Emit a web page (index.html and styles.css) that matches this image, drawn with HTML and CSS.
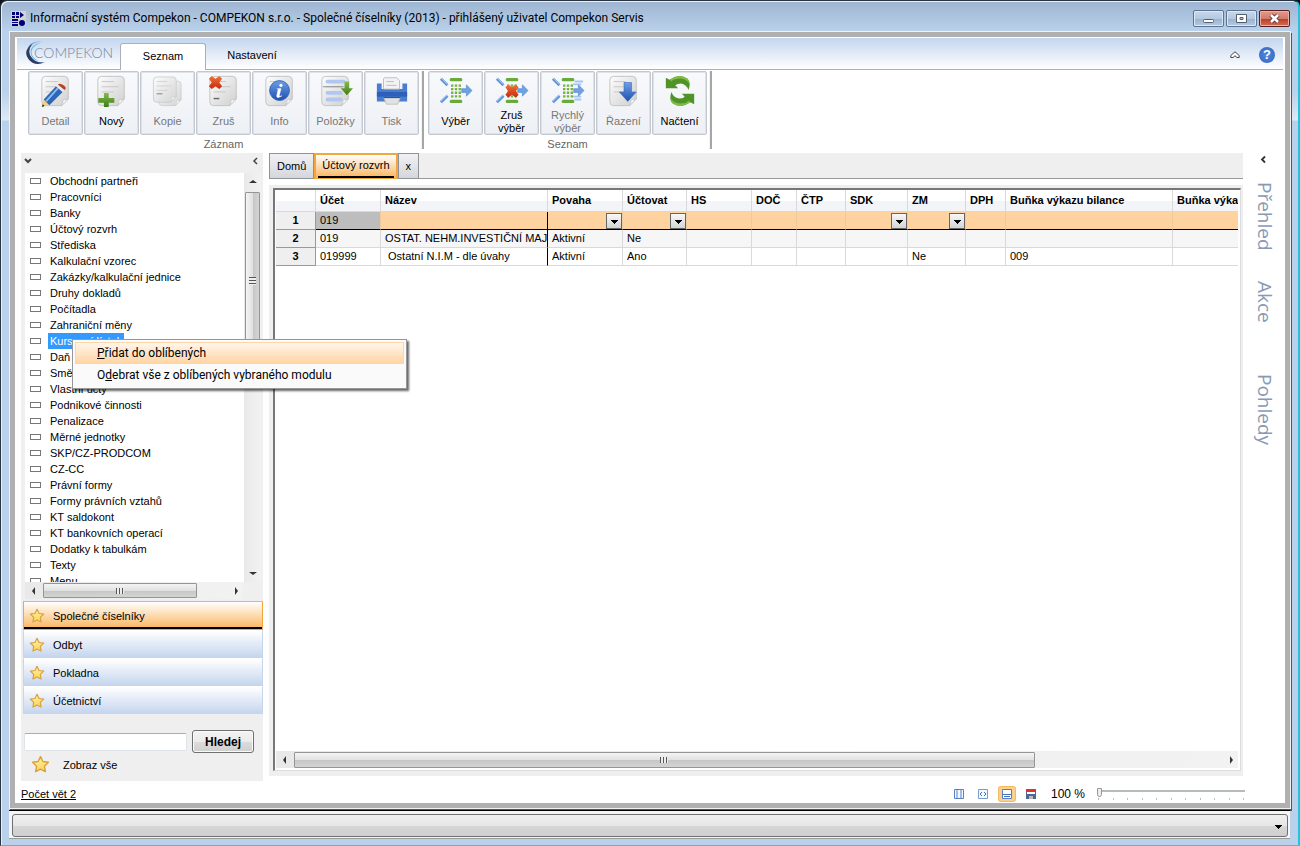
FILE: index.html
```html
<!DOCTYPE html>
<html lang="cs">
<head>
<meta charset="utf-8">
<title>Informační systém Compekon</title>
<link rel="stylesheet" href="styles.css">
</head>
<body>
<svg class="defs" aria-hidden="true">
  <defs>
    <linearGradient id="g-paper" x1="0" y1="0" x2="1" y2="1"><stop offset="0" stop-color="#fdfdfd"/><stop offset="1" stop-color="#cfcfcf"/></linearGradient>
    <linearGradient id="g-green" x1="0" y1="0" x2="0" y2="1"><stop offset="0" stop-color="#86bb4c"/><stop offset="1" stop-color="#3c7d16"/></linearGradient>
    <linearGradient id="g-blue" x1="0" y1="0" x2="0" y2="1"><stop offset="0" stop-color="#6d9fe6"/><stop offset="1" stop-color="#1e4fb0"/></linearGradient>
    <linearGradient id="g-red" x1="0" y1="0" x2="0" y2="1"><stop offset="0" stop-color="#f4733a"/><stop offset="1" stop-color="#c4290b"/></linearGradient>
    <linearGradient id="g-star" x1="0" y1="0" x2="0" y2="1"><stop offset="0" stop-color="#fff0a8"/><stop offset="1" stop-color="#fcd653"/></linearGradient>
    <symbol id="doc" viewBox="0 0 36 36">
      <path d="M7 2.500h20q4 0 4 4v20l-7 7H7q-4 0-4-4v-23q0-4 4-4z" fill="url(#g-paper)" stroke="#c4c4c4"/>
      <path d="M31 26l-7 7.500q2-3 1.500-6 3 .5 5.500-1.500z" fill="#fff" stroke="#bbb" stroke-width=".6"/>
      <path d="M7 8h13M7 13.500h18M7 19h13" stroke="#c6c6c6"/>
    </symbol>
    <symbol id="funnel" viewBox="0 0 36 36">
      <path d="M2 5l7 7M2 30l7-7" stroke="#5d94dc" stroke-width="3"/><path d="M2 4l7 7M2 29l7-7" stroke="#a9cdf5"/>
      <path d="M13 6h10M13 29h10" stroke="#69ab3a" stroke-width="3.500" stroke-linecap="round"/>
      <path d="M14 11v14M18 11v14M22 11v14" stroke="#73b23f" stroke-width="2.500" stroke-dasharray="2.500 1.300"/>
      <path d="M24 15.500h5v-4l6 6-6 6v-4h-5z" fill="#6ea2e2" stroke="#4c83cd" stroke-width=".6"/>
    </symbol>
    <symbol id="star" viewBox="0 0 18 18">
      <path d="M9 1.500l2.300 4.700 5.200.7-3.800 3.700.9 5.200L9 13.400l-4.600 2.400.9-5.200L1.500 6.900l5.200-.7z" fill="url(#g-star)" stroke="#d9a03f" stroke-width="1.300" stroke-linejoin="round"/>
    </symbol>
  </defs>
</svg>

<div class="window">
  <header class="titlebar">
    <svg class="app-icon" viewBox="0 0 15 15"><path fill="#d6d3ce" d="M0 0h15v15H0z"/><path fill="#00007b" d="M1 1h3v3H1zM5 1h3v3H5zM1 5h3v2H1zM5 5h3v2H5zM1 8h6v2H1zM1 11h6v1H1zM1 13h6v2H1zM9 1l4 3-4 3z"/><circle cx="11" cy="12" r="3" fill="#00007b"/></svg>
    <h1>Informační systém Compekon - COMPEKON s.r.o. - Společné číselníky (2013) - přihlášený uživatel Compekon Servis</h1>
    <div class="win-buttons">
      <button aria-label="Minimalizovat"><svg viewBox="0 0 29 15"><rect x="9.500" y="8.500" width="10" height="3" rx="1" fill="#fff" stroke="#555e6b"/></svg></button>
      <button aria-label="Maximalizovat"><svg viewBox="0 0 29 15"><path d="M9.500 3.500h10v8h-10zM13 6.500v2h3v-2z" fill="#fff" fill-rule="evenodd" stroke="#555e6b"/></svg></button>
      <button class="close" aria-label="Zavřít"><svg viewBox="0 0 29 15"><path d="M11 4l7 7M18 4l-7 7" stroke="#5b3b3b" stroke-width="4.500"/><path d="M11 4l7 7M18 4l-7 7" stroke="#fff" stroke-width="2.500"/></svg></button>
    </div>
  </header>

  <div class="frame">
    <nav class="ribbon-tabs">
      <div class="logo">
        <svg viewBox="0 0 28 28"><path d="M20 2Q8 1 5 9q-3 9 7 15 5 2 10 0Q4 26 2 13 3 0 20 2z" fill="#7fa4cf"/><path d="M17 3Q6 5 6 13q0 8 9 10-8-4-8-10 0-6 10-10z" fill="#6bbbe8"/><path d="M8 4Q-3 12 4 21q7 8 17 3-8 1-13-4-7-7 0-16z" fill="#2b3d66"/></svg>
        <span>COMPEKON</span>
      </div>
      <button class="rtab active">Seznam</button>
      <button class="rtab">Nastavení</button>
      <div class="ribbon-right">
        <button class="plain" aria-label="Sbalit"><svg class="i10" viewBox="0 0 10 10"><path d="M.8 7.500v-2L5 1.800l4.200 3.700v2H7L5 5.700 3 7.500z" fill="#fff" stroke="#444"/></svg></button>
        <button class="plain help" aria-label="Nápověda">?</button>
      </div>
    </nav>

    <div class="toolbar">
      <section class="group">
        <div class="tools">
          <button class="tool" disabled><svg viewBox="0 0 36 36"><use href="#doc"/><path d="M3 35l2-8 6 5z" fill="#f6cf79"/><path d="M3 35l1-3 2 2z" fill="#222"/><path d="M5 27L18 13l7 6-14 14z" fill="#2d68b7"/><path d="M7.500 29L20 15" stroke="#8bbcf0" stroke-width="2"/><path d="M18 13l2-2 7 6-2 2z" fill="#e8e8e8"/><path d="M20 11q2-2 6 1t1 5z" fill="#b6402a"/></svg><span>Detail</span></button>
          <button class="tool"><svg viewBox="0 0 36 36"><use href="#doc"/><path d="M9.500 20h5v5.500h6v5h-6V35h-5v-4.500H3.500v-5h6z" fill="url(#g-green)"/></svg><span>Nový</span></button>
          <button class="tool" disabled><svg viewBox="0 0 36 36"><g opacity=".85"><use href="#doc" x="6" y="5" width="30" height="31"/><use href="#doc" x="0" y="0" width="31" height="33"/></g><path d="M6 21h6" stroke="#777"/></svg><span>Kopie</span></button>
          <button class="tool" disabled><svg viewBox="0 0 36 36"><use href="#doc"/><path d="M7 26h6" stroke="#666" stroke-width="1.500"/><path d="M2 5l3-3 4 3 4-3 3 3-3 4 3 4-3 3-4-3-4 3-3-3 3-4z" fill="url(#g-red)"/></svg><span>Zruš</span></button>
          <button class="tool" disabled><svg viewBox="0 0 36 36"><use href="#doc"/><circle cx="17.500" cy="17.500" r="10.500" fill="url(#g-blue)" stroke="#2f66bd"/><circle cx="19" cy="12" r="1.700" fill="#fff"/><path d="M15 15.500h4l-2 8q1 .5 3-.5-5 3.500-5.500.5l1.500-7z" fill="#fff" stroke="#fff" stroke-width=".6"/></svg><span>Info</span></button>
          <button class="tool" disabled><svg viewBox="0 0 36 36"><use href="#doc"/><path d="M9 8h17M9 20h14M9 27h14" stroke="#b1c7ef" stroke-width="4" stroke-linecap="round"/><path d="M4 13.500h22" stroke="#8d8d8d"/><path d="M27 8h5v7h4l-6.500 7.500L23 15h4z" fill="url(#g-green)"/></svg><span>Položky</span></button>
          <button class="tool" disabled><svg viewBox="0 0 36 36"><path d="M2 10h5v6h22v-6h5v19H2z" fill="#4a7dd0"/><path d="M2 19h32v5H2z" fill="#2e5fb9"/><path d="M10 4h13l3 3v9H9V5z" fill="#f3f3f3" stroke="#bbb"/><path d="M12 8h8M12 12h11" stroke="#bbb"/><path d="M9 25h18l-3 7H12z" fill="#e2e2e2" stroke="#aaa" stroke-width=".6"/><path d="M9 25h18" stroke="#1d438a"/></svg><span>Tisk</span></button>
        </div>
        <h2>Záznam</h2>
      </section>
      <section class="group">
        <div class="tools">
          <button class="tool"><svg viewBox="0 0 36 36"><use href="#funnel"/></svg><span>Výběr</span></button>
          <button class="tool two"><svg viewBox="0 0 36 36"><use href="#funnel"/><path d="M11 14l3-3 4 3 4-3 3 3-3 4 3 4-3 3-4-3-4 3-3-3 3-4z" fill="url(#g-red)"/></svg><span>Zruš<br>výběr</span></button>
          <button class="tool two" disabled><svg viewBox="0 0 36 36"><path d="M23 11h9M23 24h9M25 8h9M25 27h7" stroke="#a5c6f2" stroke-width="2"/><use href="#funnel"/></svg><span>Rychlý<br>výběr</span></button>
          <button class="tool" disabled><svg viewBox="0 0 36 36"><use href="#doc"/><path d="M18 9h8v10h5l-9 10-9-10h5z" fill="url(#g-blue)" stroke="#3769b9" stroke-width=".6"/></svg><span>Řazení</span></button>
          <button class="tool"><svg viewBox="0 0 36 36"><g id="hook"><path d="M3 4l4 2Q17-1 26 5q4 4 1 12-2-6-8-7-4 0-6 2l3 3H3z" fill="#4f9426"/><path d="M7 6Q17-1 26 5q2 2 2 5-5-6-12-5-5 0-7 3z" fill="#82bb49"/></g><use href="#hook" transform="rotate(180 18 18)"/></svg><span>Načtení</span></button>
        </div>
        <h2>Seznam</h2>
      </section>
    </div>

    <main class="work">
      <aside class="sidebar">
        <div class="side-head">
          <button class="plain" aria-label="Rozbalit"><svg class="i8" viewBox="0 0 8 8"><path d="M1 2l3 3 3-3" fill="none" stroke="#444" stroke-width="2"/></svg></button>
          <button class="plain" aria-label="Skrýt"><svg class="i8" viewBox="0 0 8 8"><path d="M6 1L3 4l3 3" fill="none" stroke="#444" stroke-width="1.500"/></svg></button>
        </div>
        <div class="tree-box">
          <ul class="tree">
            <li><a href="#">Obchodní partneři</a></li>
            <li><a href="#">Pracovníci</a></li>
            <li><a href="#">Banky</a></li>
            <li><a href="#">Účtový rozvrh</a></li>
            <li><a href="#">Střediska</a></li>
            <li><a href="#">Kalkulační vzorec</a></li>
            <li><a href="#">Zakázky/kalkulační jednice</a></li>
            <li><a href="#">Druhy dokladů</a></li>
            <li><a href="#">Počítadla</a></li>
            <li><a href="#">Zahraniční měny</a></li>
            <li><a href="#" class="selected">Kursovní lístek</a></li>
            <li><a href="#">Daň z příjmů</a></li>
            <li><a href="#">Směrnice</a></li>
            <li><a href="#">Vlastní účty</a></li>
            <li><a href="#">Podnikové činnosti</a></li>
            <li><a href="#">Penalizace</a></li>
            <li><a href="#">Měrné jednotky</a></li>
            <li><a href="#">SKP/CZ-PRODCOM</a></li>
            <li><a href="#">CZ-CC</a></li>
            <li><a href="#">Právní formy</a></li>
            <li><a href="#">Formy právních vztahů</a></li>
            <li><a href="#">KT saldokont</a></li>
            <li><a href="#">KT bankovních operací</a></li>
            <li><a href="#">Dodatky k tabulkám</a></li>
            <li><a href="#">Texty</a></li>
            <li><a href="#">Menu</a></li>
          </ul>
          <div class="scroll-v"><i class="arrow up"></i><div class="thumb"></div><i class="arrow down"></i></div>
        </div>
        <div class="scroll-h side-scroll"><i class="arrow left"></i><div class="thumb"></div><i class="arrow right"></i></div>
        <nav class="modules">
          <button class="module active"><svg><use href="#star"/></svg>Společné číselníky</button>
          <button class="module"><svg><use href="#star"/></svg>Odbyt</button>
          <button class="module"><svg><use href="#star"/></svg>Pokladna</button>
          <button class="module"><svg><use href="#star"/></svg>Účetnictví</button>
        </nav>
        <form class="search">
          <input type="text" aria-label="Hledaný text">
          <button type="button">Hledej</button>
        </form>
        <button class="plain show-all"><svg><use href="#star"/></svg>Zobraz vše</button>
      </aside>

      <section class="content">
        <div class="tabs">
          <button class="tab">Domů</button>
          <button class="tab active"><span>Účtový rozvrh</span></button>
          <button class="tab">x</button>
        </div>
        <div class="panel">
          <div class="grid">
            <div class="grid-view">
              <table>
                <colgroup><col class="c40"><col class="c65"><col class="c167"><col class="c75"><col class="c64"><col class="c65"><col class="c45"><col class="c49"><col class="c62"><col class="c58"><col class="c40"><col class="c167"><col class="c167"></colgroup>
                <thead><tr><th></th><th>Účet</th><th>Název</th><th>Povaha</th><th>Účtovat</th><th>HS</th><th>DOČ</th><th>ČTP</th><th>SDK</th><th>ZM</th><th>DPH</th><th>Buňka výkazu bilance</th><th>Buňka výkazu zisku</th></tr></thead>
                <tbody>
                  <tr class="filter"><th>1</th><td class="current"><input type="text" value="019" aria-label="Účet"></td><td class="fixed"></td><td><select aria-label="Povaha"><option></option></select></td><td><select aria-label="Účtovat"><option></option></select></td><td></td><td></td><td></td><td><select aria-label="SDK"><option></option></select></td><td><select aria-label="ZM"><option></option></select></td><td></td><td></td><td></td></tr>
                  <tr class="alt"><th>2</th><td>019</td><td class="fixed">OSTAT. NEHM.INVESTIČNÍ MAJ</td><td>Aktivní</td><td>Ne</td><td></td><td></td><td></td><td></td><td></td><td></td><td></td><td></td></tr>
                  <tr><th>3</th><td>019999</td><td class="fixed">&nbsp;Ostatní N.I.M - dle úvahy</td><td>Aktivní</td><td>Ano</td><td></td><td></td><td></td><td></td><td>Ne</td><td></td><td>009</td><td></td></tr>
                </tbody>
              </table>
            </div>
            <div class="scroll-h grid-scroll"><i class="arrow left"></i><div class="thumb"></div><i class="arrow right"></i></div>
          </div>
        </div>
      </section>

      <aside class="rail">
        <button class="plain" aria-label="Rozbalit panel"><svg class="i8" viewBox="0 0 8 8"><path d="M6 1L3 4l3 3" fill="none" stroke="#333" stroke-width="1.800"/></svg></button>
        <button class="plain side-label">Přehled</button>
        <button class="plain side-label">Akce</button>
        <button class="plain side-label last">Pohledy</button>
      </aside>
    </main>

    <footer class="status">
      <a href="#">Počet vět 2</a>
      <div class="view-tools">
        <button class="plain" aria-label="Sloupce"><svg viewBox="0 0 16 14"><path d="M3.500 2.500h9v9h-9zM6 2.500v9M10 2.500v9" fill="#f4f8ff" stroke="#5b80c0"/></svg></button>
        <button class="plain" aria-label="Šířka"><svg viewBox="0 0 16 14"><path d="M3.500 2.500h9v9h-9z" fill="#f4f8ff" stroke="#7a9ad0"/><path d="M7 5L5 7l2 2M9 5l2 2-2 2" fill="none" stroke="#3f6fc5"/></svg></button>
        <button class="plain on" aria-label="Řádky"><svg viewBox="0 0 16 14"><path d="M3.500 2.500h9v9h-9z" fill="#fff" stroke="#5b80c0"/><path d="M4 7.500h8M5 9.500h6" stroke="#3f6fc5"/></svg></button>
        <button class="plain" aria-label="Uložit"><svg viewBox="0 0 16 14"><path d="M3 2h10v10H3z" fill="#51668f"/><path d="M3 2h10v3H3z" fill="#d33"/><path d="M4 5h8v2H4z" fill="#fff"/><path d="M6 9h4v3H6z" fill="#bbb"/></svg></button>
      </div>
      <label for="zoom">100 %</label>
      <div class="slider"><input id="zoom" type="range" min="0" max="10" value="0"><div class="ticks"><i></i><i></i><i></i><i></i><i></i><i></i><i></i><i></i><i></i><i></i><i></i></div></div>
    </footer>
  </div>

  <div class="bottom-bar"><select aria-label="Zprávy"><option></option></select></div>

  <div class="context-menu" role="menu">
    <button role="menuitem" class="hover"><u>P</u>řidat do oblíbených</button>
    <button role="menuitem">O<u>d</u>ebrat vše z oblíbených vybraného modulu</button>
  </div>
</div>
</body>
</html>
```
FILE: styles.css
```css
* { box-sizing: border-box; }

body {
  margin: 0;
  background: #101418;
  color: #000;
  font: 11px/16px "Liberation Sans", Arial, sans-serif;
}

button, input, select { margin: 0; padding: 0; border: 0; border-radius: 0; background: none; color: inherit; font: inherit; }
select { appearance: none; }
.defs { position: absolute; width: 0; height: 0; }
h1, h2 { margin: 0; font-weight: normal; }
a { color: inherit; text-decoration: none; }
.plain { display: flex; align-items: center; }
.i10 { width: 10px; height: 10px; }
.i8 { width: 8px; height: 8px; }

.window {
  position: relative;
  display: flex;
  flex-direction: column;
  height: 100vh;
  padding: 0 7px 6px 8px;
  border: 1px solid #2a3440;
  border-right: 2px solid #22c3dc;
  border-bottom-color: #35c9df;
  border-radius: 7px 7px 0 0;
  background: linear-gradient(#9db5d1, #b9d1ea 30px, #b9d1ea 90px, #dfe9f4 119px, #b9d1ea 120px);
  box-shadow: inset 1px 1px 0 #e8f1fa;
}

.titlebar { display: flex; align-items: center; flex: none; height: 30px; padding: 4px 1px 0 2px; gap: 4px; }
.titlebar h1 { flex: 1; font: 12px/16px Roboto, sans-serif; white-space: nowrap; }
.app-icon { width: 15px; height: 15px; }
.win-buttons { display: flex; gap: 2px; }
.win-buttons button {
  display: flex;
  width: 31px;
  height: 17px;
  border: 1px solid #5d7391;
  border-radius: 2px;
  background: linear-gradient(#c7d8eb, #b4c9e0 50%, #98b2cf 51%, #b3cbe3);
  box-shadow: inset 0 0 0 1px #dbe8f5;
}
.win-buttons .close { border-color: #5a1f1b; background: linear-gradient(#e29a8d, #d47b6b 50%, #b93c22 51%, #d1705a); box-shadow: inset 0 0 0 1px #ecb0a5; }
.win-buttons svg { width: 29px; height: 15px; }

.frame {
  display: flex;
  flex-direction: column;
  flex: 1;
  min-height: 0;
  padding: 1px 2px 0;
  border: solid #b0b0b0;
  border-width: 5px;
  outline: 1px solid #f2f2f2;
  margin: 1px 1px 2px;
  background: #fff;
  box-shadow: 1px 2px 0 1px #555;
}

.ribbon-tabs {
  display: flex;
  align-items: flex-end;
  flex: none;
  height: 32px;
  border-bottom: 1px solid #a9b0ba;
  background: linear-gradient(#c3d5ee, #fff);
}
.logo { display: flex; align-items: center; align-self: stretch; width: 103px; padding: 0 0 2px 8px; }
.logo svg { width: 26px; height: 26px; flex: none; }
.logo span { margin-left: -17px; color: #7788a0; font: 300 14px/20px Lato, sans-serif; }
.rtab { width: 92px; height: 27px; padding-bottom: 2px; }
.rtab.active { width: 86px; margin-bottom: -1px; border: 1px solid #a9b0ba; border-bottom: 0; border-radius: 3px 3px 0 0; background: #fff; }
.ribbon-right { display: flex; align-items: center; align-self: stretch; gap: 19px; margin-left: auto; padding: 2px 8px 0; }
.help { justify-content: center; width: 16px; height: 16px; border-radius: 50%; background: radial-gradient(#4f86e0, #3565bd); color: #fff; font-weight: bold; font-size: 13px; }

.toolbar { display: flex; flex: none; height: 83px; padding: 1px 0 4px 11px; }
.group { width: max-content; margin-right: 4px; padding-right: 3px; border-right: 2px solid #a6a6a6; box-shadow: inset -1px 0 0 #f3f3f3; }
.group h2 { padding: 1px 0; color: #666; font-size: 11px; line-height: 16px; text-align: center; }
.tools { display: flex; gap: 1px; }
.tool {
  display: flex;
  flex-direction: column;
  align-items: center;
  width: 55px;
  height: 64px;
  padding-top: 2px;
  border: 1px solid #c3c8d0;
  border-radius: 2px;
  background: linear-gradient(#f8f9fb, #edf0f5);
  box-shadow: inset 0 0 0 1px #dfe3e9;
  line-height: 13px;
}
.tool svg { flex: none; width: 34px; height: 34px; margin-bottom: 7px; }
.tool.two svg { margin-bottom: 1px; }
.tool:disabled { color: #777; }

.work { display: flex; flex: 1; min-height: 0; padding: 0 0 0 4px; }
.sidebar { flex: none; width: 242px; margin-bottom: 1px; padding-left: 2px; background: #efefef; }
.side-head { display: flex; justify-content: space-between; height: 20px; padding: 0 4px 4px 1px; }
.tree-box { display: flex; height: calc(100% - 219px); padding: 0 2px; }
.tree { flex: 1; margin: 0; padding: 0 0 0 21px; overflow: hidden; background: #fff; list-style: none; white-space: nowrap; }
.tree li { display: flex; align-items: center; height: 16px; }
.tree li::before { width: 9px; height: 4px; margin: 0 7px 0 -16px; border: 1px solid #777; content: ""; }
.tree a { padding: 0 2px; }
.tree .selected { background: #3399ff; color: #fff; }

.scroll-v, .scroll-h { display: flex; align-items: center; background: linear-gradient(90deg, #e9e9e9, #f2f2f2); }
.scroll-v { flex-direction: column; width: 17px; }
.scroll-h { height: 17px; }
.arrow { flex: none; border: 3px solid transparent; }
.up { margin: 7px 0 9px; border-top: 0; border-bottom: 4px solid #333; border-width: 0 4px 3px; }
.down { margin: auto 0 7px; border-top: 4px solid #333; border-width: 3px 4px 0; }
.left { margin-left: 7px; border-right: 4px solid #333; border-width: 4px 3px 4px 0; }
.right { margin: 0 5px 0 auto; border-left: 4px solid #333; border-width: 4px 0 4px 3px; }
.thumb { border: 1px solid #959595; border-radius: 1px; background: linear-gradient(#f4f4f4, #e1e1e1 50%, #c6c6c6 51%, #d4d4d4); }
.scroll-v .thumb { display: flex; align-items: center; width: 15px; height: 178px; background: linear-gradient(90deg, #f4f4f4, #e1e1e1 50%, #c6c6c6 51%, #d4d4d4); }
.scroll-v .thumb::after { width: 7px; height: 8px; margin-left: 3px; background: repeating-linear-gradient(#555 0 1px, #eee 1px 3px); content: ""; }
.scroll-h .thumb { display: flex; align-items: center; justify-content: center; height: 15px; margin-left: 8px; }
.scroll-h .thumb::after { width: 8px; height: 6px; background: repeating-linear-gradient(90deg, #555 0 1px, #eee 1px 3px); content: ""; }
.side-scroll { width: 218px; margin: 0 0 2px 2px; }
.side-scroll .thumb { width: 154px; }

.modules { border-top: 1px solid #f4b05a; }
.module {
  display: flex;
  align-items: center;
  gap: 8px;
  width: 100%;
  height: 28px;
  padding-left: 5px;
  border: 1px solid #c3d4ec;
  border-top-color: #fff;
  border-bottom: 0;
  background: linear-gradient(#fff, #c3d4ee);
}
.module svg { width: 16px; height: 16px; }
.module.active { border: solid #f4a63e; border-width: 0 1px 1px; background: linear-gradient(#fff, #fbb45c); box-shadow: inset 0 -2px 0 #000; }
.search { display: flex; align-items: center; gap: 5px; padding: 16px 9px 0 1px; }
.search input { flex: 1; min-width: 0; height: 18px; border: 1px solid #dfe3ea; border-top-color: #abadb3; border-radius: 2px; background: #fff; }
.search button { width: 62px; height: 23px; border: 1px solid #707070; border-radius: 3px; background: linear-gradient(#f3f3f3, #ebebeb 50%, #dcdcdc 51%, #cfcfcf); box-shadow: inset 0 0 0 1px #fafafa; font-weight: bold; font-size: 12px; }
.show-all { gap: 13px; height: 23px; padding-left: 8px; }
.show-all svg { width: 19px; height: 19px; }

.content { display: flex; flex-direction: column; flex: 1; min-width: 0; margin: 0 0 6px 6px; }
.tabs { display: flex; flex: none; height: 26px; border-bottom: 1px solid #999; background: #efefef; }
.tab { height: 26px; padding: 0 7px; border: 1px solid #8f9299; background: linear-gradient(#f1f1f3, #d5d7dc); line-height: 22px; }
.tab.active { padding: 0 2px; border: solid #f4a63e; border-width: 2px 2px 1px; background: linear-gradient(#fff, #fbb45c); line-height: 21px; }
.tab.active span { display: block; height: 23px; padding: 0 4px; border-bottom: 2px solid #000; }
.panel { display: flex; flex: 1; min-height: 0; margin-top: 6px; padding: 3px 2px 5px 4px; background: #efefef; }
.grid { display: flex; flex-direction: column; flex: 1; min-width: 0; padding: 0 2px 2px 1px; border: 2px solid #777; border-right: 1px solid #ddd; border-bottom: 1px solid #ddd; background: #fff; }
.grid-view { flex: 1; min-height: 0; overflow: hidden; }
.grid-scroll .thumb { width: 77%; height: 16px; }

table { width: 964px; table-layout: fixed; border-collapse: separate; border-spacing: 0; line-height: 15px; }
.c40 { width: 40px; }
.c45 { width: 45px; }
.c49 { width: 49px; }
.c58 { width: 58px; }
.c62 { width: 62px; }
.c64 { width: 64px; }
.c65 { width: 65px; }
.c75 { width: 75px; }
.c167 { width: 167px; }
td, th { height: 18px; padding: 0 0 0 4px; overflow: hidden; border: solid #d9d9d9; border-width: 0 1px 1px 0; text-align: left; white-space: nowrap; }
thead th { height: 22px; background: linear-gradient(#fff 50%, #f2f4f7 51%); }
tbody th { padding: 0; border-color: #999; background: #efefef; text-align: center; }
.alt td { background: #f6f6f6; }
.filter td { border-color: #ecca9e; border-bottom-color: #000; background: #ffd3a0; }
.filter .current { background: #bdbdbd; }
td.fixed, .filter td.fixed { border-right-color: #000; }
td input { display: block; width: 100%; height: 15px; }
td select { display: block; width: 16px; height: 16px; margin-left: auto; border: 1px solid #666; background: linear-gradient(#000, #000) 4px 6px / 7px 1px no-repeat, linear-gradient(#000, #000) 5px 7px / 5px 1px no-repeat, linear-gradient(#000, #000) 6px 8px / 3px 1px no-repeat, linear-gradient(#000, #000) 7px 9px / 1px 1px no-repeat, linear-gradient(#f8f8f8, #d4d4d4); }

.rail { display: flex; flex-direction: column; align-items: center; flex: none; width: 40px; padding-top: 2px; }
.rail .i8 { height: 9px; }
.side-label { margin-top: 18px; padding-left: 3px; color: #8799b5; font: 19px/26px "Open Sans", sans-serif; writing-mode: vertical-rl; }
.side-label + .side-label { margin-top: 30px; }
.side-label + .side-label.last { margin-top: 52px; }

.status { display: flex; align-items: center; flex: none; height: 21px; padding: 2px 38px 0 4px; }
.status a { text-decoration: underline; }
.view-tools { display: flex; gap: 8px; margin-left: auto; }
.view-tools svg { width: 16px; height: 14px; }
.view-tools .on { border-radius: 2px; background: #ffd08a; box-shadow: 0 0 0 1px #f4b968; }
.status label { margin: 0 12px; font-size: 12px; }
.slider { width: 148px; }
.slider input { display: block; width: 100%; height: 9px; appearance: none; background: linear-gradient(#b6bcbc, #b6bcbc) 0 2px / 100% 2px no-repeat; }
.slider input::-webkit-slider-thumb { width: 5px; height: 9px; appearance: none; border: 1px solid #999; border-radius: 0 0 3px 3px; background: #eee; }
.ticks { display: flex; justify-content: space-between; padding: 1px 1px 0; }
.ticks i { width: 1px; height: 2px; background: #bbb; }

.bottom-bar { flex: none; height: 29px; margin: 0 1px 0 0; padding: 3px 2px 2px 3px; border-top: 1px solid #000; border-bottom: 1px solid #999; background: #f5f5f5; }
.bottom-bar select { display: block; width: 100%; height: 23px; border: 1px solid #707070; border-radius: 3px; background: linear-gradient(#000, #000) right 5px top 10px / 7px 1px no-repeat, linear-gradient(#000, #000) right 6px top 11px / 5px 1px no-repeat, linear-gradient(#000, #000) right 7px top 12px / 3px 1px no-repeat, linear-gradient(#000, #000) right 8px top 13px / 1px 1px no-repeat, linear-gradient(#f0f0f0, #e6e6e6 50%, #d6d6d6 51%, #cfcfcf); }

.context-menu { position: absolute; top: 338px; left: 71px; width: 335px; padding: 2px; border: 1px solid #979797; background: #fafafa; box-shadow: 2px 2px 2px rgba(0, 0, 0, .6); font: 12px/22px Roboto, sans-serif; }
.context-menu button { display: block; width: 100%; height: 22px; padding-left: 21px; border: 1px solid transparent; line-height: 20px; text-align: left; white-space: nowrap; }
.context-menu .hover { border-color: #fcd6a8; background: linear-gradient(#fff6ec, #ffd5a3); }
```
